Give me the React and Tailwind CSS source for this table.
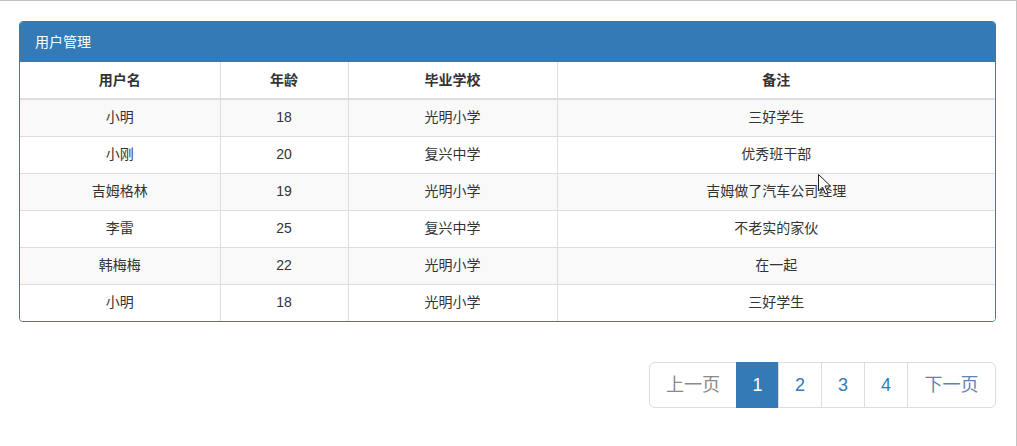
import React from 'react';

const rows = [
  ['小明', '18', '光明小学', '三好学生'],
  ['小刚', '20', '复兴中学', '优秀班干部'],
  ['吉姆格林', '19', '光明小学', '吉姆做了汽车公司经理'],
  ['李雷', '25', '复兴中学', '不老实的家伙'],
  ['韩梅梅', '22', '光明小学', '在一起'],
  ['小明', '18', '光明小学', '三好学生'],
];

const font = { fontFamily: '"Liberation Sans", "Noto Sans CJK SC", sans-serif' };

const App = () => {
  return (
    <div
      className="relative w-[1017px] h-[446px] bg-white border-t border-r border-[#c4c4c4] text-[#333] text-[14px] overflow-hidden"
      style={font}
    >
      <div className="pt-[20px] pl-[19px] pr-[19px]">
        <div className="w-[977px] border border-[#337ab7] rounded-[4px] overflow-hidden">
          <div className="h-[40px] bg-[#337ab7] text-white px-[15px] flex items-center">用户管理</div>
          <table className="w-full border-collapse">
            <thead>
              <tr className="h-[37px]">
                <th className="w-[200px] font-bold border-r border-b-2 border-[#ddd]">用户名</th>
                <th className="w-[128px] font-bold border-r border-l border-b-2 border-[#ddd]">年龄</th>
                <th className="w-[209px] font-bold border-r border-l border-b-2 border-[#ddd]">毕业学校</th>
                <th className="font-bold border-l border-b-2 border-[#ddd]">备注</th>
              </tr>
            </thead>
            <tbody>
              {rows.map((r, i) => (
                <tr key={i} className={`h-[37px] ${i % 2 === 0 ? 'bg-[#f9f9f9]' : 'bg-white'}`}>
                  <td className={`text-center border-r border-[#ddd] ${i > 0 ? 'border-t' : ''}`}>{r[0]}</td>
                  <td className={`text-center border-x border-[#ddd] ${i > 0 ? 'border-t' : ''}`}>{r[1]}</td>
                  <td className={`text-center border-x border-[#ddd] ${i > 0 ? 'border-t' : ''}`}>{r[2]}</td>
                  <td className={`text-center border-l border-[#ddd] ${i > 0 ? 'border-t' : ''}`}>{r[3]}</td>
                </tr>
              ))}
            </tbody>
          </table>
        </div>
      </div>

      <div className="flex justify-end pr-[20px] mt-[40px]">
        <ul className="flex text-[18px] leading-[24px]">
          <li className="w-[88px] h-[46px] flex items-center justify-center border border-[#ddd] rounded-l-[6px] text-[#8a8a8a]">上一页</li>
          <li className="w-[43px] h-[46px] flex items-center justify-center bg-[#337ab7] border border-[#337ab7] text-white -ml-px">1</li>
          <li className="w-[44px] h-[46px] flex items-center justify-center border border-[#ddd] text-[#337ab7] -ml-px">2</li>
          <li className="w-[44px] h-[46px] flex items-center justify-center border border-[#ddd] text-[#337ab7] -ml-px">3</li>
          <li className="w-[44px] h-[46px] flex items-center justify-center border border-[#ddd] text-[#337ab7] -ml-px">4</li>
          <li className="w-[89px] h-[46px] flex items-center justify-center border border-[#ddd] rounded-r-[6px] text-[#5f84ad] -ml-px">下一页</li>
        </ul>
      </div>

      <svg className="absolute left-[818px] top-[173px]" width="14" height="22" viewBox="0 0 14 22">
        <path d="M0.5 0.5 L0.5 17 L4.5 13 L7.5 20 L10 19 L7 12 L12.5 12 Z" fill="white" stroke="#222" strokeWidth="1" />
      </svg>
    </div>
  );
};

export default App;
